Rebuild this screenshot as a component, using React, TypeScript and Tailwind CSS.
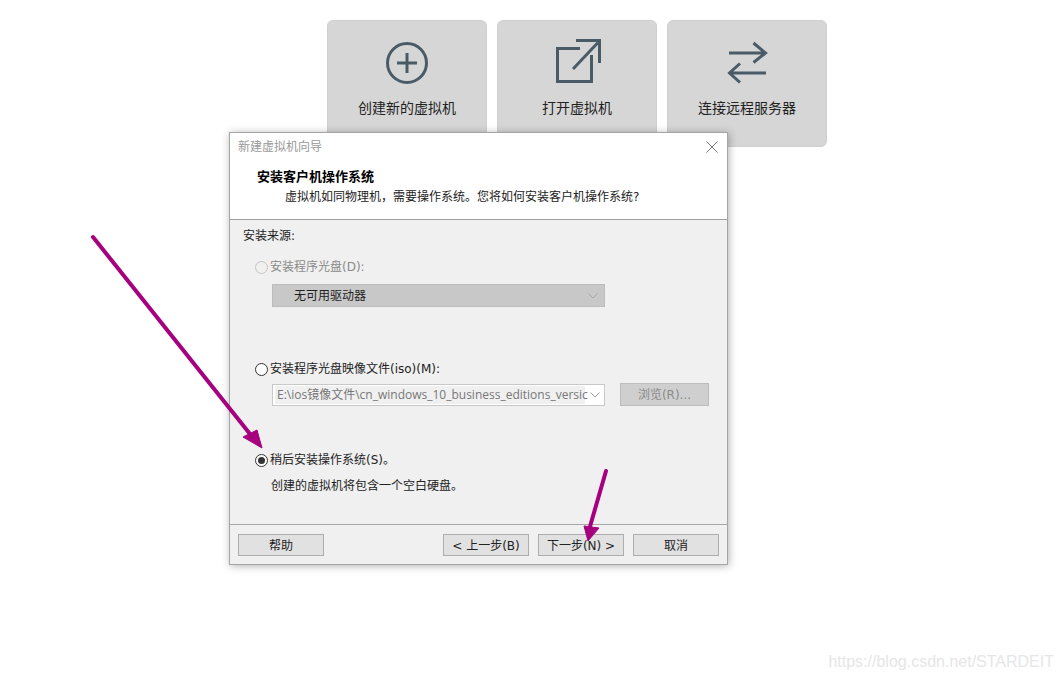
const font = { fontFamily: '"DejaVu Sans", "Noto Sans CJK SC", sans-serif' };

function PlusIcon() {
  return (
    <svg width="48" height="48" viewBox="0 0 48 48" fill="none" stroke="#4a5b68" strokeWidth="3">
      <circle cx="24" cy="24" r="19.500" />
      <path d="M24 14v20M14 24h20" />
    </svg>
  );
}

function OpenIcon() {
  return (
    <svg width="48" height="48" viewBox="0 0 48 48" fill="none" stroke="#4a5b68" strokeWidth="3">
      <path d="M27 9.500H4.500v33h34V16" />
      <path d="M20 30 45 3.500" />
      <path d="M23 1.500h23.500V24" />
    </svg>
  );
}

function SwapIcon() {
  return (
    <svg width="48" height="48" viewBox="0 0 48 48" fill="none" stroke="#4a5b68" strokeWidth="3">
      <path d="M6 14h36M30.500 4 42.500 14 30.500 23.500" />
      <path d="M43 34H7M17 24.500 6.500 34 17 43.500" />
    </svg>
  );
}

function Card({ icon, label }: { icon: React.ReactNode; label: string }) {
  return (
    <div className="w-[160px] h-[127px] rounded-md bg-[#d6d6d6] border border-[#d0d0d0] flex flex-col items-center pt-[18px]">
      {icon}
      <div className="mt-[9px] text-[14px] leading-[22px] text-[#222]" style={{ fontFamily: '"Noto Sans CJK SC", sans-serif' }}>{label}</div>
    </div>
  );
}

function Radio({ state }: { state: "off" | "disabled" | "on" }) {
  return (
    <span
      className={
        state === "disabled"
          ? "w-[13px] h-[13px] rounded-full border border-[#c4c4c4] bg-[#f0f0f0] flex items-center justify-center"
          : "w-[13px] h-[13px] rounded-full border border-[#333] bg-white flex items-center justify-center"
      }
    >
      {state === "on" && <span className="w-[7px] h-[7px] rounded-full bg-[#333]" />}
    </span>
  );
}

function Chevron({ color }: { color: string }) {
  return (
    <svg width="10" height="6" viewBox="0 0 10 6" fill="none" stroke={color}>
      <path d="M.5.5 5 5 9.500.5" />
    </svg>
  );
}

function Button({ label, className }: { label: string; className: string }) {
  return (
    <div className={"w-[86px] h-[22px] border border-[#adadad] bg-[#e1e1e1] flex items-center justify-center pt-[2px] text-[#222] " + className}>
      {label}
    </div>
  );
}

export default function App() {
  return (
    <div className="relative w-[1063px] h-[679px] bg-white overflow-hidden" style={font}>
      <div className="flex gap-[10px] pl-[327px] pt-[20px]">
        <Card icon={<PlusIcon />} label="创建新的虚拟机" />
        <Card icon={<OpenIcon />} label="打开虚拟机" />
        <Card icon={<SwapIcon />} label="连接远程服务器" />
      </div>

      {/* dialog */}
      <div className="absolute left-[229px] top-[132px] w-[499px] h-[433px] border border-[#a5a5a5] bg-white flex flex-col shadow-[1px_1px_8px_rgba(0,0,0,0.3)] text-[12px] leading-[18px] text-[#222]">
        <div className="h-[87px] shrink-0 bg-white border-b border-[#a0a0a0] flex flex-col">
          <div className="flex justify-between pl-[8px] pr-[9px] pt-[5px] text-[#999]">
            <span>新建虚拟机向导</span>
            <svg className="mt-[3px]" width="12" height="12" viewBox="0 0 12 12" fill="none" stroke="#777">
              <path d="M.5.5l11 11M11.500.500l-11 11" />
            </svg>
          </div>
          <div className="pl-[27px] mt-[12px] text-[13px] font-bold text-black">安装客户机操作系统</div>
          <div className="pl-[55px] mt-[2px]">虚拟机如同物理机，需要操作系统。您将如何安装客户机操作系统?</div>
        </div>

        <div className="flex-1 bg-[#f0f0f0] flex flex-col pl-[13px]">
          <div className="mt-[7px]">安装来源:</div>

          <div className="flex items-center gap-[2px] ml-[12px] mt-[13px] text-[#8a8a8a]">
            <Radio state="disabled" />
            <span>安装程序光盘(D):</span>
          </div>
          <div className="ml-[29px] mt-[8px] w-[333px] h-[23px] bg-[#c8c8c8] border border-[#bcbcbc] flex items-center justify-between pt-[1px] pl-[21px] pr-[6px]">
            <span>无可用驱动器</span>
            <Chevron color="#a8a8a8" />
          </div>

          <div className="flex items-center gap-[2px] ml-[12px] mt-[53px]">
            <Radio state="off" />
            <span>安装程序光盘映像文件(iso)(M):</span>
          </div>
          <div className="flex ml-[29px] mt-[5px] items-center gap-[15px]">
            <div className="w-[333px] h-[22px] bg-white border border-[#c8c8c8] flex items-center pl-[2px] pr-[6px]">
              <div
                className="w-[310px] h-[18px] bg-[#f0f0f0] text-[#777] whitespace-nowrap pl-[2px]"
                style={{ fontFamily: '"Open Sans", "Noto Sans CJK SC", sans-serif' }}
              >
                E:\ios镜像文件\cn_windows_10_business_editions_versic
              </div>
              <span className="ml-[5px]"><Chevron color="#a0a0a0" /></span>
            </div>
            <div className="w-[89px] h-[23px] bg-[#cfcfcf] border border-[#bcbcbc] text-[#8a8a8a] flex items-center justify-center">
              浏览(R)...
            </div>
          </div>

          <div className="flex items-center gap-[2px] ml-[12px] mt-[45px]">
            <Radio state="on" />
            <span>稍后安装操作系统(S)。</span>
          </div>
          <div className="ml-[28px] mt-[8px]">创建的虚拟机将包含一个空白硬盘。</div>
        </div>

        <div className="h-[40px] shrink-0 bg-[#f0f0f0] border-t border-[#a8a8a8] flex items-center pl-[8px]">
          <Button label="帮助" className="" />
          <Button label="< 上一步(B)" className="ml-[119px]" />
          <Button label="下一步(N) >" className="ml-[9px]" />
          <Button label="取消" className="ml-[9px]" />
        </div>
      </div>

      {/* annotation arrows */}
      <svg className="absolute left-0 top-0" width="1063" height="679" viewBox="0 0 1063 679" fill="none">
        <path d="M93 237 254 439" stroke="#a6007f" strokeWidth="4" strokeLinecap="round" />
        <path d="M262 448 243 437 257 430Z" fill="#a6007f" stroke="#a6007f" />
        <path d="M606 471 589 530" stroke="#a6007f" strokeWidth="4" strokeLinecap="round" />
        <path d="M588 541 584 526 599 528Z" fill="#a6007f" stroke="#a6007f" />
      </svg>

      <div
        className="absolute right-[9px] top-[650px] text-[16px] text-[#e6e6e6]"
        style={{ fontFamily: '"Liberation Sans", sans-serif' }}
      >
        https://blog.csdn.net/STARDEIT
      </div>
    </div>
  );
}
